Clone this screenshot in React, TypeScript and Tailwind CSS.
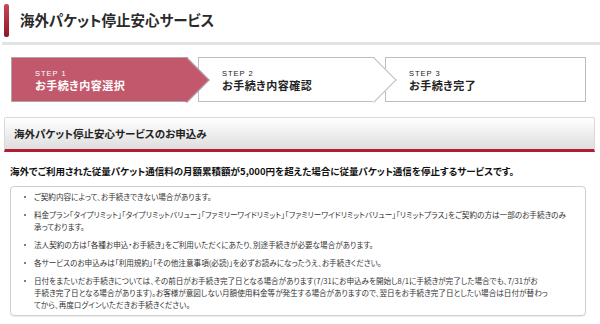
const jp = "font-['Noto_Sans_CJK_JP','Noto_Sans',sans-serif] [font-feature-settings:'palt']";

const steps = [
  { no: "STEP 1", label: "お手続き内容選択", active: true, w: "w-[177px]", arrow: true },
  { no: "STEP 2", label: "お手続き内容確認", active: false, w: "w-[177px]", arrow: true },
  { no: "STEP 3", label: "お手続き完了", active: false, w: "w-[201px]", arrow: false },
];

const notes: string[][] = [
  ["ご契約内容によって、お手続きできない場合があります。"],
  [
    "料金プラン「タイプリミット」「タイプリミットバリュー」「ファミリーワイドリミット」「ファミリーワイドリミットバリュー」「リミットプラス」をご契約の方は一部のお手続きのみ",
    "承っております。",
  ],
  ["法人契約の方は「各種お申込・お手続き」をご利用いただくにあたり、別途手続きが必要な場合があります。"],
  ["各サービスのお申込みは「利用規約」「その他注意事項(必読)」を必ずお読みになったうえ、お手続きください。"],
  [
    "日付をまたいだお手続きについては、その前日がお手続き完了日となる場合があります(7/31にお申込みを開始し8/1に手続きが完了した場合でも、7/31がお",
    "手続き完了日となる場合があります)。お客様が意図しない月額使用料金等が発生する場合がありますので、翌日をお手続き完了日としたい場合は日付が替わっ",
    "てから、再度ログインいただきお手続きください。",
  ],
];

function Step({ no, label, active, w, arrow, z }: { no: string; label: string; active: boolean; w: string; arrow: boolean; z: string }) {
  const fill = active ? "bg-[#c1586b] border-[#b3a2a6] text-white" : "bg-white border-[#bdbdbd] text-[#222]";
  return (
    <div className={`relative ${z} ${w} h-[45px] border ${fill} flex flex-col justify-center pl-[23px] pt-[2px]`}>
      {arrow && (
        <div className={`absolute right-[-16px] top-[5.5px] w-[32px] h-[32px] rotate-45 border-t border-r ${fill}`} />
      )}
      <div className="relative">
        <div className="font-['Liberation_Sans',sans-serif] text-[7.5px] leading-[9px] tracking-[1px]">{no}</div>
        <div className="text-[11px] leading-[14px] font-bold tracking-[0.5px]">{label}</div>
      </div>
    </div>
  );
}

export default function App() {
  return (
    <div className={`w-[600px] h-[324px] overflow-hidden bg-white text-[#222] ${jp}`}>
      {/* page title */}
      <div className="flex items-center ml-[4px] mt-[4px] h-[33px]">
        <div className="w-[5px] h-[33px] rounded-[2px] bg-gradient-to-b from-[#c9465a] to-[#8f1426]" />
        <h1 className="ml-[11px] text-[14.5px] font-bold text-[#2a2a2a] leading-none">海外パケット停止安心サービス</h1>
      </div>
      <div className="mt-[5px] ml-[2px] h-[3px] bg-[#e3e3e3]" />

      {/* steps */}
      <div className="flex mt-[12px] ml-[11px] gap-[10px]">
        {steps.map((s, i) => (
          <Step key={s.no} {...s} z={i === 0 ? "z-30" : i === 1 ? "z-20" : "z-10"} />
        ))}
      </div>

      {/* section header */}
      <div className="mt-[15px] mx-[4px] mr-[5px] h-[35px] rounded-t-[2px] border border-b-0 border-[#d8d8d8] bg-gradient-to-b from-white to-[#dedede] border-b-[3px] border-b-[#b11d31] flex items-center pl-[9px]">
        <h2 className="text-[10.5px] font-bold text-[#222]">海外パケット停止安心サービスのお申込み</h2>
      </div>

      <p className="mt-[12px] ml-[10px] text-[9.5px] leading-[14px] font-bold text-[#111]">
        海外でご利用された従量パケット通信料の月額累積額が5,000円を超えた場合に従量パケット通信を停止するサービスです。
      </p>

      {/* notes */}
      <ul className="mt-[8px] ml-[10px] w-[576px] h-[130px] rounded-[4px] border border-[#cfcfcf] shadow-[0_1px_1px_rgba(0,0,0,0.08)] pt-[4px] pl-[13px] pr-[4px] flex flex-col gap-[6px]">
        {notes.map((n) => (
          <li key={n[0]} className="flex text-[7.6px] leading-[12px] text-[#333]">
            <span className="w-[10px] shrink-0 flex items-start pt-[5px]">
              <span className="w-[2px] h-[2px] rounded-full bg-[#555]" />
            </span>
            <span className="whitespace-nowrap">
              {n.map((line, i) => (
                <span key={i}>
                  {i > 0 && <br />}
                  {line}
                </span>
              ))}
            </span>
          </li>
        ))}
      </ul>
    </div>
  );
}
